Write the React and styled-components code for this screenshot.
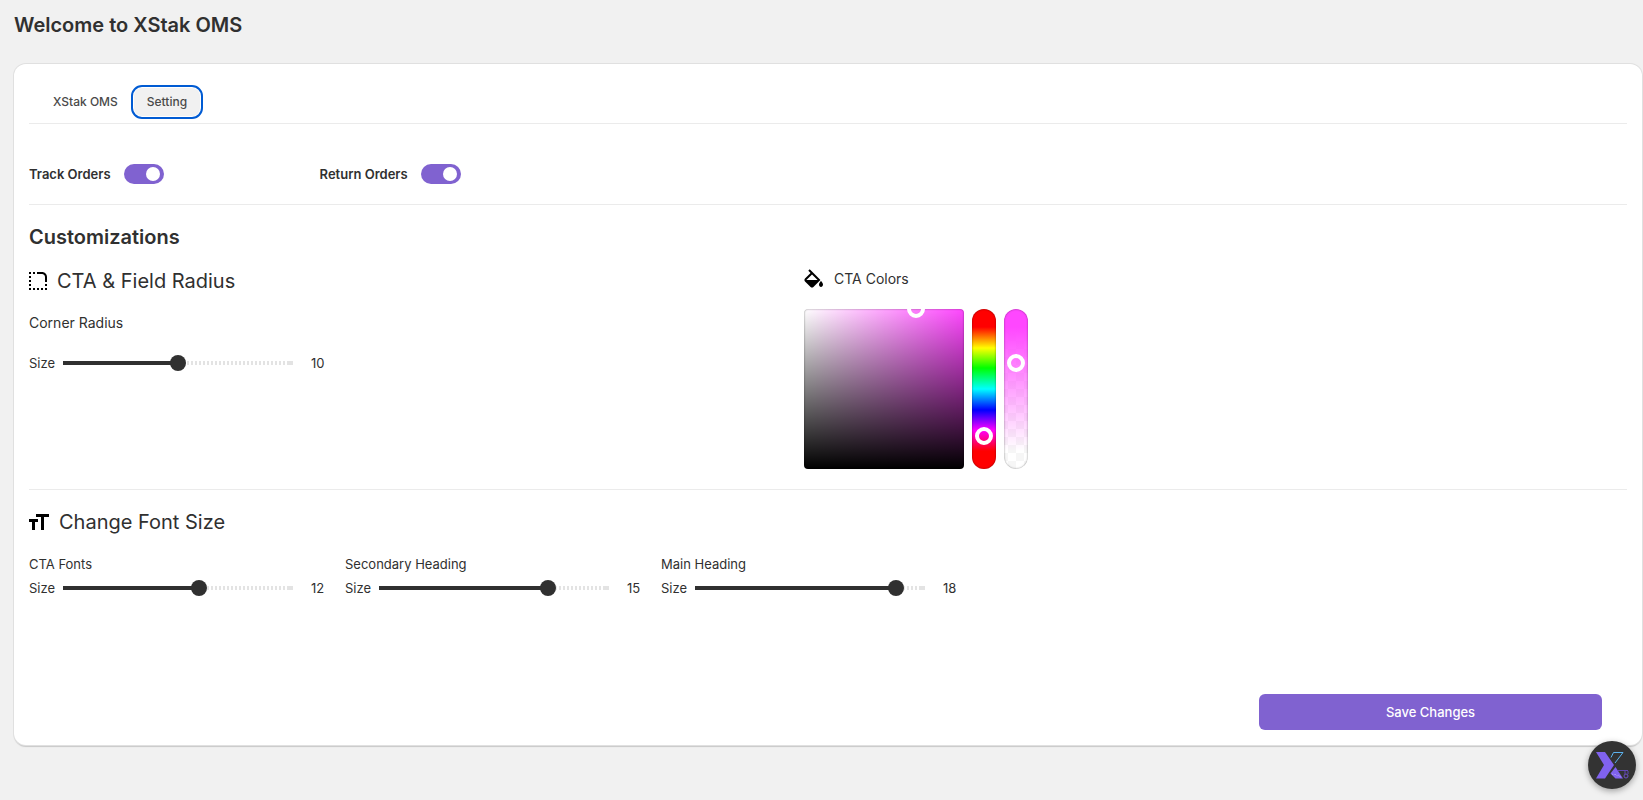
import React, { useState } from 'react';
import styled, { createGlobalStyle } from 'styled-components';
import { MdRoundedCorner } from 'react-icons/md';
import { BiSolidColorFill } from 'react-icons/bi';

const GlobalStyle = createGlobalStyle`
  * {
    box-sizing: border-box;
  }

  body {
    margin: 0;
    background: #f1f1f1;
    color: #303030;
    font-family: Inter, "Liberation Sans", sans-serif;
    font-size: 13px;
    line-height: 20px;
  }

  button,
  input {
    font: inherit;
  }
`;

const Page = styled.main`
  padding: 13px 1px 54px 14px;
`;

const PageTitle = styled.h1`
  margin: 0 0 27px;
  font-size: 20px;
  line-height: 24px;
  font-weight: 600;
`;

const Card = styled.section`
  padding: 16px 15px 15px;
  background: #fff;
  border-radius: 12px;
  box-shadow: 0 0 0 1px #e0e0e0, 0 2px 1px #c8c8c8;
`;

const Tabs = styled.div`
  display: flex;
  gap: 3px;
  padding: 8px 11px 7px;
  border-bottom: 1px solid #ebebeb;
`;

const Tab = styled.button`
  height: 28px;
  padding: 0 13px;
  border: 0;
  border-radius: 8px;
  background: ${({ $active }) => ($active ? '#f1f1f1' : 'transparent')};
  outline: ${({ $active }) => ($active ? '2px solid #005bd3' : 'none')};
  outline-offset: 1px;
  color: #4a4a4a;
  font-size: 12px;
  font-weight: 500;
  cursor: pointer;
`;

const SwitchRow = styled.div`
  display: flex;
  gap: 156px;
  padding: 40px 0 20px;
  border-bottom: 1px solid #ebebeb;
`;

const SwitchLabel = styled.label`
  display: flex;
  align-items: center;
  gap: 13px;
  font-weight: 600;
`;

const Switch = styled.input`
  appearance: none;
  display: flex;
  align-items: center;
  justify-content: flex-start;
  width: 40px;
  height: 20px;
  margin: 0;
  padding: 0 4px;
  border-radius: 10px;
  background: #b5b5b5;
  cursor: pointer;

  &::before {
    content: '';
    width: 14px;
    height: 14px;
    border-radius: 50%;
    background: #fff;
  }

  &:checked {
    justify-content: flex-end;
    background: #8062d0;
  }
`;

const SectionTitle = styled.h2`
  margin: 20px 0;
  font-size: 20px;
  line-height: 24px;
  font-weight: 600;
`;

const Columns = styled.div`
  display: grid;
  grid-template-columns: 97fr 103fr;
  padding-bottom: 20px;
  border-bottom: 1px solid #ebebeb;
`;

const Heading = styled.h3`
  display: flex;
  align-items: center;
  gap: 10px;
  margin: 0;
  font-size: ${({ $small }) => ($small ? '14px' : '20px')};
  line-height: ${({ $small }) => ($small ? '20px' : '24px')};
  font-weight: 400;

  svg {
    flex: none;
    color: #000;
  }
`;

const FieldName = styled.p`
  margin: 20px 0;
  font-size: 14px;
`;

const SliderGroup = styled.div`
  display: flex;
  gap: 16px;
  padding-bottom: 96px;
`;

const SliderField = styled.div`
  width: 300px;
`;

const GroupName = styled.p`
  margin: 0 0 4px;
`;

const SliderRow = styled.label`
  display: grid;
  grid-template-columns: auto 230px auto;
  align-items: center;
  justify-content: start;
  gap: 8px;
`;

const Range = styled.input`
  appearance: none;
  width: 100%;
  height: 16px;
  margin: 0;
  background:
    linear-gradient(#303030, #303030) 0 50% / ${({ $fill }) => $fill} 4px no-repeat,
    linear-gradient(#e3e3e3, #e3e3e3) 100% 50% / 5px 4px no-repeat,
    repeating-linear-gradient(90deg, #e3e3e3 0 2px, transparent 2px 4px) 0 50% / 100% 4px no-repeat;
  border-radius: 2px;
  cursor: pointer;

  &::-webkit-slider-thumb {
    appearance: none;
    width: 16px;
    height: 16px;
    border: 0;
    border-radius: 50%;
    background: #303030;
  }
`;

const Value = styled.output`
  padding-left: 10px;
`;

const Picker = styled.div`
  display: flex;
  gap: 8px;
  margin-top: 20px;
`;

const Swatch = styled.div`
  position: relative;
  width: 160px;
  height: 160px;
  overflow: hidden;
  border-radius: 4px;
  background:
    linear-gradient(to top, #000, transparent),
    linear-gradient(to right, #fff, transparent),
    #ff47ff;
  box-shadow: inset 0 0 2px rgba(0, 0, 0, 0.5);
`;

const Strip = styled.div`
  position: relative;
  width: 24px;
  height: 160px;
  border-radius: 12px;
  box-shadow: inset 0 0 2px rgba(0, 0, 0, 0.5);
`;

const HueStrip = styled(Strip)`
  background: linear-gradient(
    to bottom,
    #f00 18px,
    #ff0 39px,
    #0f0 59px,
    #0ff 80px,
    #00f 101px,
    #f0f 121px,
    #f00 142px
  );
`;

const AlphaStrip = styled(Strip)`
  background:
    linear-gradient(to bottom, #ff47ff 18px, transparent 142px),
    repeating-conic-gradient(#f6f6f6 0 25%, #fff 0 50%) 4px 0 / 16px 16px;
`;

const Handle = styled.span`
  position: absolute;
  left: ${({ $x }) => $x}px;
  top: ${({ $y }) => $y}px;
  width: 18px;
  height: 18px;
  border: 4px solid #fff;
  border-radius: 50%;
`;

const Actions = styled.div`
  display: flex;
  justify-content: flex-end;
  padding-right: 25px;
`;

const SaveButton = styled.button`
  width: 343px;
  height: 36px;
  border: 0;
  border-radius: 6px;
  background: #8062d0;
  color: #fff;
  font-weight: 500;
  cursor: pointer;
`;

const ChatButton = styled.button`
  position: fixed;
  right: 7px;
  bottom: 11px;
  width: 48px;
  height: 48px;
  padding: 0;
  border: 0;
  border-radius: 50%;
  background: #333;
  box-shadow: 0 2px 6px rgba(0, 0, 0, 0.35);
  cursor: pointer;

  svg {
    display: block;
  }
`;

function FontSizeIcon() {
  return (
    <svg width="20" height="16" viewBox="0 0 20 16" aria-hidden="true">
      <path d="M7 0h13v3h-5v13h-3V3H7zM0 5h9v3H6v8H3V8H0z" />
    </svg>
  );
}

function BrandIcon() {
  return (
    <svg width="48" height="48" viewBox="0 0 48 48" aria-hidden="true">
      <path d="M8 11h9l9 13-9 13.500H8l8-13.500z" fill="#8062ee" />
      <path d="M27.500 26l7.500 11.500h-7.500l-5-5z" fill="#8062ee" />
      <path d="M25.500 11.500H35L27 22M25.500 11.500L23 16.500" fill="none" stroke="#5bb2ee" />
      <path d="M30 29.500h10M37 30v3M40 30v3" fill="none" stroke="#6348b4" />
      <circle cx="38" cy="35" r="2" fill="none" stroke="#6e50c4" />
      <path d="M24 33l2 1 1-1 2 2 2-1 2 3" fill="none" stroke="#b5a4f5" strokeDasharray="1 1" />
    </svg>
  );
}

function SizeSlider({ name, initial }) {
  const [value, setValue] = useState(initial);
  const ratio = value / 20;

  return (
    <SliderRow>
      Size
      <Range
        type="range"
        min="0"
        max="20"
        aria-label={name}
        value={value}
        $fill={`${ratio * 100}%`}
        onChange={(event) => setValue(Number(event.target.value))}
      />
      <Value>{value}</Value>
    </SliderRow>
  );
}

function App() {
  const fonts = [
    { name: 'CTA Fonts', size: 12 },
    { name: 'Secondary Heading', size: 15 },
    { name: 'Main Heading', size: 18 },
  ];

  return (
    <>
      <GlobalStyle />
      <Page>
        <PageTitle>Welcome to XStak OMS</PageTitle>
        <Card>
          <Tabs role="tablist">
            <Tab role="tab" aria-selected="false">XStak OMS</Tab>
            <Tab role="tab" aria-selected="true" $active>Setting</Tab>
          </Tabs>
          <SwitchRow>
            <SwitchLabel>
              Track Orders
              <Switch type="checkbox" defaultChecked />
            </SwitchLabel>
            <SwitchLabel>
              Return Orders
              <Switch type="checkbox" defaultChecked />
            </SwitchLabel>
          </SwitchRow>
          <SectionTitle>Customizations</SectionTitle>
          <Columns>
            <div>
              <Heading>
                <MdRoundedCorner size={18} viewBox="3 3 18 18" />
                CTA &amp; Field Radius
              </Heading>
              <FieldName>Corner Radius</FieldName>
              <SizeSlider name="Corner Radius" initial={10} />
            </div>
            <div>
              <Heading $small>
                <BiSolidColorFill size={20} viewBox="3 2 20 20" />
                CTA Colors
              </Heading>
              <Picker>
                <Swatch><Handle $x={103} $y={-9} /></Swatch>
                <HueStrip><Handle $x={3} $y={118} /></HueStrip>
                <AlphaStrip><Handle $x={3} $y={45} /></AlphaStrip>
              </Picker>
            </div>
          </Columns>
          <SectionTitle as="div">
            <Heading>
              <FontSizeIcon />
              Change Font Size
            </Heading>
          </SectionTitle>
          <SliderGroup>
            {
              fonts.map(({ name, size }) => (
                <SliderField key={name}>
                  <GroupName>{name}</GroupName>
                  <SizeSlider name={name} initial={size} />
                </SliderField>
              ))
            }
          </SliderGroup>
          <Actions>
            <SaveButton type="button">Save Changes</SaveButton>
          </Actions>
        </Card>
      </Page>
      <ChatButton type="button" aria-label="XStak">
        <BrandIcon />
      </ChatButton>
    </>
  );
}

export default App;
